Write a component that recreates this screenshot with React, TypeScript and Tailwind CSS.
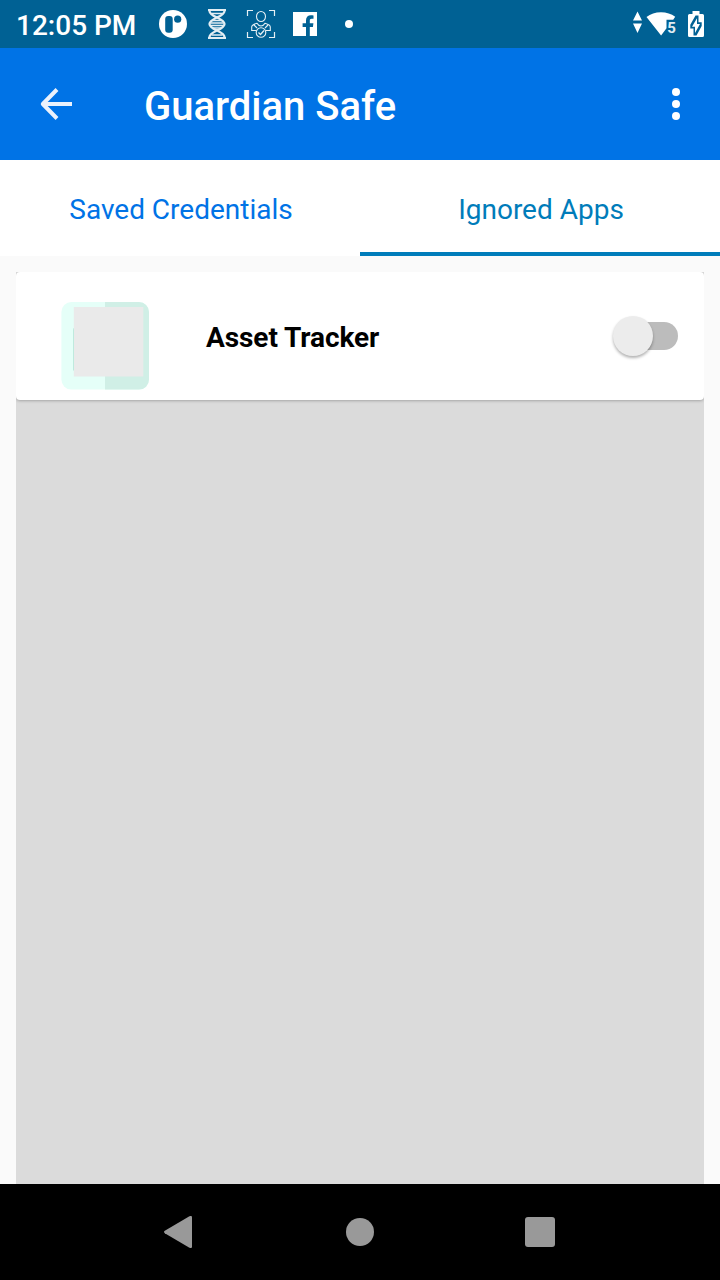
import React from "react";

function ParkingIcon() {
  return (
    <svg className="h-8 w-8" viewBox="0 0 32 32">
      <circle cx="16" cy="16" r="14" fill="#fff" />
      <rect x="8.200" y="8" width="7.500" height="16.800" rx="3" fill="#006194" />
      <circle cx="20.700" cy="11.200" r="3.600" fill="#006194" />
    </svg>
  );
}

function DnaIcon() {
  return (
    <svg className="h-8 w-8" viewBox="0 0 32 32" fill="none" stroke="#e2edf3">
      <path d="M8.500 2v1c0 6 15 7 15 13s-15 7-15 13v1M23.500 2v1c0 6-15 7-15 13s15 7 15 13v1" strokeWidth="2.300" />
      <path d="M7 2h18M7 30h18" strokeWidth="1.800" />
      <path d="M10.500 5.500h11M11 12.500h10M9.500 15h13M9.500 17.500h13M11 20h10M10.500 27h11" strokeWidth="1.300" />
    </svg>
  );
}

function FaceScanIcon() {
  return (
    <svg className="h-8 w-8" viewBox="0 0 32 32" fill="none" stroke="#e6f0f5">
      <path d="M2.500 8V2.500H8M24 2.500h5.500V8M2.500 24v5.500H8M24 29.500h5.500V24" strokeWidth="1.200" />
      <ellipse cx="16" cy="8.500" rx="4.500" ry="5" strokeWidth="1.100" />
      <path d="M11 22.500H6.700V19c0-2 1.800-2.700 5.300-3.700 1 1.800 2.400 2.700 4 2.700s3-.9 4-2.700c3.500 1 5.300 1.700 5.300 3.700v3.500H21M9 17l3 3M23 17l-3 3" strokeWidth="1.100" />
      <circle cx="16" cy="24.500" r="4.800" strokeWidth="1.100" />
      <path d="m13.500 24.500 2 2 3.500-4" strokeWidth="1.300" />
    </svg>
  );
}

function FacebookIcon() {
  return (
    <svg className="h-8 w-8" viewBox="0 0 32 32">
      <path fill="#fff" d="M4 4h24v24h-4.800v-9h3.100l.5-3.700h-3.600v-2.200c0-1.300.5-1.900 1.900-1.900h.4V7.500c-.6-.1-.9-.2-1.700-.2-3 0-5 1.700-5 5v3h-3.300V19h3.300v9H4z" />
    </svg>
  );
}

function StatusBar() {
  return (
    <div className="flex h-12 items-center bg-[#006194] pl-4 text-white">
      <span className="w-[141px] whitespace-nowrap pt-[3px] text-[28px] font-medium leading-8">12:05 PM</span>
      <div className="flex items-center gap-3">
        <ParkingIcon />
        <DnaIcon />
        <FaceScanIcon />
        <svg className="h-8 w-8" viewBox="0 0 32 32">
          <path fill="#fff" d="M4 4h24v24H4z" />
          <path fill="#006194" d="M17 28v-9h-3.400v-3.700H17v-3c0-3.300 2-5.100 4.900-5.100 1 0 1.700.1 2.600.2v3.400h-1.900c-1.400 0-1.800.7-1.800 1.900v2.600h3.600l-.5 3.700h-3.100v9z" />
        </svg>
        <span className="ml-3 h-2 w-2 rounded-full bg-white" />
      </div>
      <svg className="ml-auto h-12 w-[90px]" viewBox="630 0 90 48" fill="#fff">
        <path d="M637.500 11.500 642 20.500h-9zM637.500 33 633 23.500h9z" />
        <path d="M646.500 17c4-3.200 8.800-4.800 14.500-4.800 5.500 0 10.300 1.500 14.200 4.500l-2 3.100h-6.700v8.500l-5.400 7.200z" />
        <text x="667.300" y="33" fontSize="15" fontWeight="700" fontFamily="Roboto, sans-serif" fill="#e2edf3">5</text>
        <path d="M692.500 11h7v3h3q1.500 0 1.500 1.500v20q0 1.500-1.500 1.500h-13q-1.500 0-1.500-1.500v-20q0-1.500 1.500-1.500h3z" />
        <path d="M698.500 15.500v6.800h3.200v3.700l-5.200 9.500h-3v-7h-3.200v-3.700l5.200-9.300z" fill="#006194" />
        <path d="M697 18.300v5.700h3l-5 9v-6.200h-3z" />
      </svg>
    </div>
  );
}

function AppHeader() {
  return (
    <header className="flex h-28 items-center bg-[#0073e6] text-white">
      <button className="ml-8 h-12 w-12" aria-label="Back">
        <svg className="h-12 w-12" viewBox="0 0 48 48" fill="none" stroke="#ebf2fc" strokeWidth="4" strokeLinejoin="round">
          <path d="M40 24H11M25 9.500 10.800 24 25 38.500" />
        </svg>
      </button>
      <h1 className="ml-16 pt-[6px] text-[40px] font-medium leading-[48px]">Guardian Safe</h1>
      <button className="ml-auto mr-10 flex flex-col gap-1" aria-label="More options">
        <span className="h-2 w-2 rounded-full bg-white" />
        <span className="h-2 w-2 rounded-full bg-white" />
        <span className="h-2 w-2 rounded-full bg-white" />
      </button>
    </header>
  );
}

function Tabs() {
  return (
    <nav className="grid h-24 grid-cols-2 bg-white text-[28px]">
      <button className="border-b-4 border-white pl-[2px] pt-2 text-[#0073e6]">Saved Credentials</button>
      <button className="border-b-4 border-[#007cba] pl-[2px] pt-2 text-[#007cba]">Ignored Apps</button>
    </nav>
  );
}

function AppIcon() {
  return (
    <svg className="h-[88px] w-[88px]" viewBox="0 0 88 88">
      <rect x=".4" width="87.600" height="87.600" rx="10" fill="#e5fff8" />
      <path d="M44 0h34a10 10 0 0 1 10 10v67.600a10 10 0 0 1-10 10H44z" fill="#d0efe6" />
      <path d="M14 26h-1q-1 0-1 2v40l2 2z" fill="#b5eadb" />
      <rect x="12.800" y="5" width="69.500" height="69.500" fill="#eaeaea" />
    </svg>
  );
}

function IgnoredAppRow({ name }: { name: string }) {
  return (
    <div className="flex h-32 rounded-[4px] bg-white shadow-[0_1px_3px_rgba(0,0,0,0.25)]">
      <div className="ml-[45px] mt-[30px]">
        <AppIcon />
      </div>
      <span className="ml-[57px] mt-[50px] text-[28px] font-bold leading-8 tracking-[-0.08px] text-black">{name}</span>
      <button className="ml-auto mr-[26px] mt-11 flex h-10 w-[65px] items-center" role="switch" aria-checked="false" aria-label={name}>
        <span className="z-10 h-10 w-10 shrink-0 rounded-full bg-[#ececec] shadow-[0_2px_3px_rgba(0,0,0,0.3)]" />
        <span className="-ml-8 h-7 w-[57px] shrink-0 rounded-full bg-[#bcbcbc]" />
      </button>
    </div>
  );
}

function NavigationBar() {
  return (
    <div className="grid h-24 grid-cols-[192px_336px_192px] items-center bg-black">
      <svg className="h-8 w-7 justify-self-end" viewBox="0 0 28 32" fill="#999">
        <path d="M25 .4Q28-1 28 1.500v29q0 2.500-3 1.100L.8 17.200q-1.600-1.200 0-2.400z" />
      </svg>
      <span className="h-7 w-7 justify-self-center rounded-full bg-[#999]" />
      <span className="-ml-[3px] h-[30px] w-[30px] rounded-[3px] bg-[#999]" />
    </div>
  );
}

export default function App() {
  return (
    <div className="flex h-[1280px] w-[720px] flex-col overflow-hidden bg-[#fafafa] font-['Roboto',sans-serif]">
      <StatusBar />
      <AppHeader />
      <Tabs />
      <main className="flex-1 px-4 pt-4">
        <div className="h-full overflow-hidden bg-[#dbdbdb]">
          <IgnoredAppRow name="Asset Tracker" />
        </div>
      </main>
      <NavigationBar />
    </div>
  );
}
